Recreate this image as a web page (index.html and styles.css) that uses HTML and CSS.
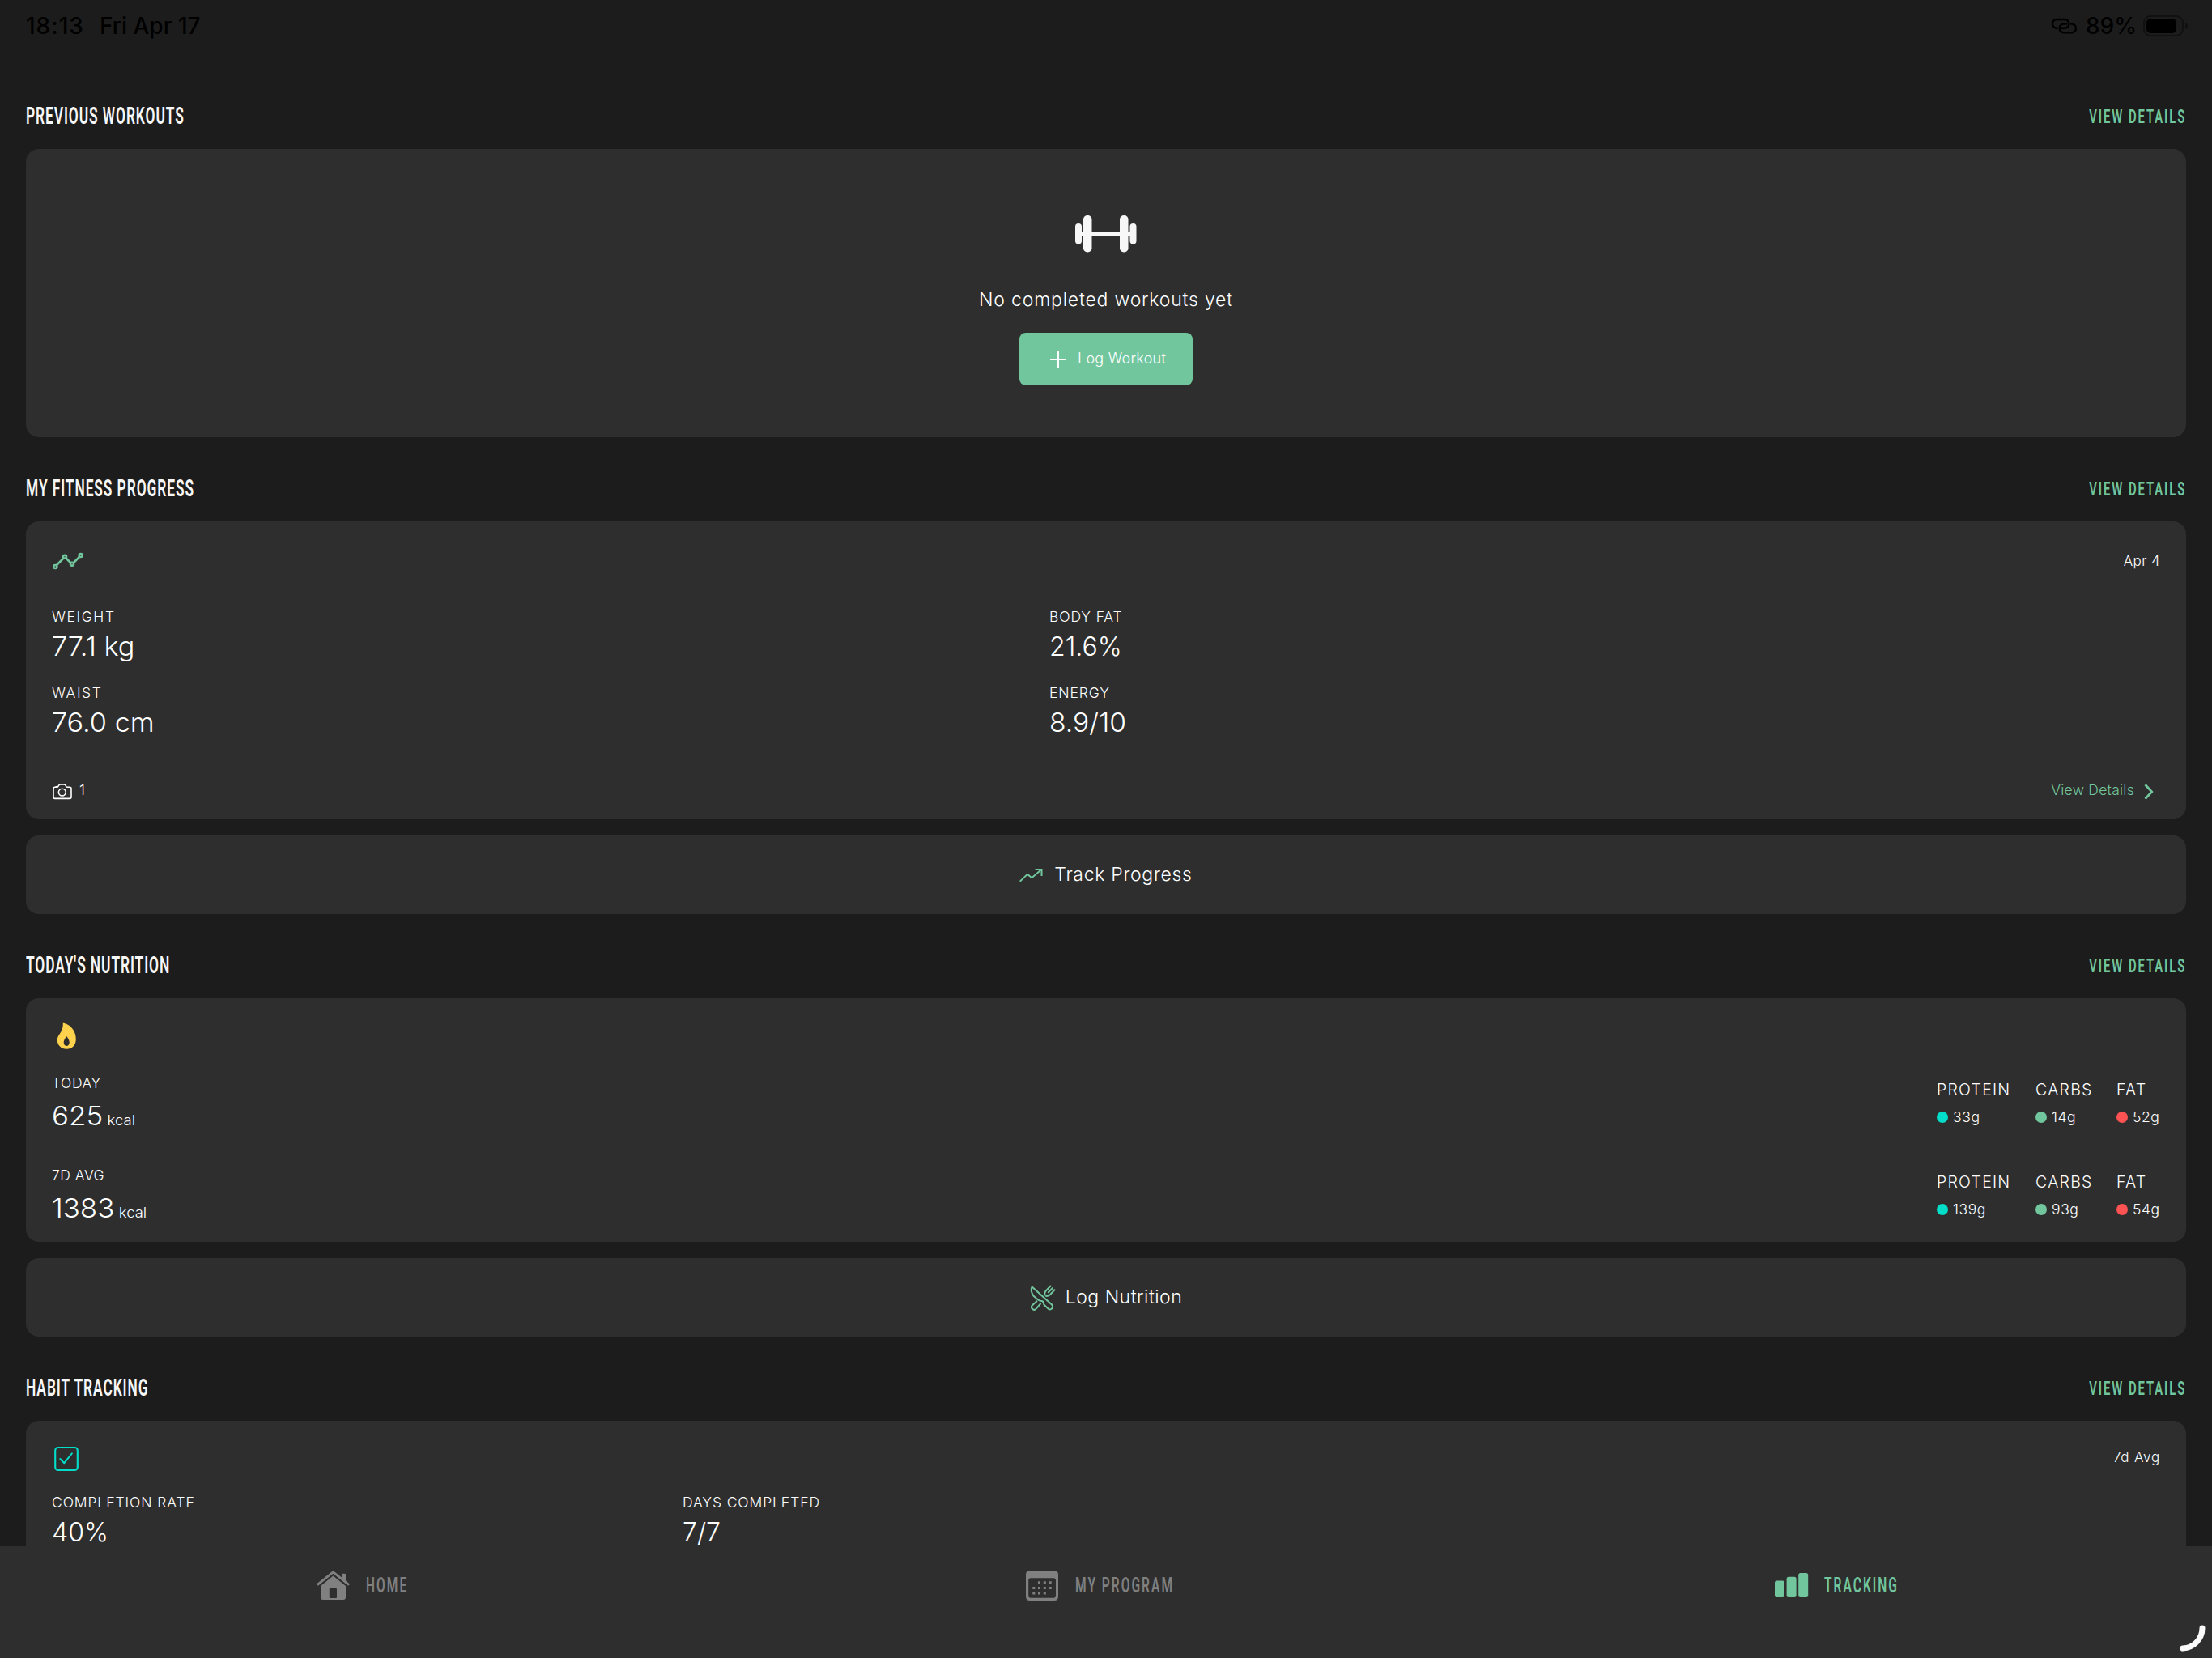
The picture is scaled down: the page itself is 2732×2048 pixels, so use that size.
FILE: index.html
```html
<!DOCTYPE html>
<html lang="en">
<head>
  <meta charset="UTF-8">
  <meta name="viewport" content="width=device-width, initial-scale=1">
  <title>Tracking</title>
  <link rel="stylesheet" href="styles.css">
</head>
<body>

  <!-- Status bar -->
  <header class="status-bar">
    <div class="status-left">
      <span class="time">18:13</span>
      <span class="date">Fri Apr 17</span>
    </div>
    <div class="status-right">
      <svg class="link-icon" width="33" height="21" viewBox="0 0 33 21" fill="none" stroke="#000" stroke-width="2.4" stroke-linecap="round">
        <path d="M7.8 12.8H7.3a5.4 5.4 0 0 1 0-10.8H17a5.4 5.4 0 0 1 0 10.8H13.6"/>
        <path d="M25 7.5h.6a5.4 5.4 0 0 1 0 10.8H16a5.4 5.4 0 0 1 0-10.8h3.2"/>
      </svg>
      <span class="battery-text">89%</span>
      <svg width="56" height="28" viewBox="0 0 56 28">
        <rect x="1" y="2" width="48" height="24" rx="8" fill="none" stroke="#111" stroke-width="2"/>
        <rect x="4" y="5" width="37" height="18" rx="5.5" fill="#000"/>
        <path d="M52 10c2.6 1 3 2.4 3 4s-.4 3-3 4z" fill="#111"/>
      </svg>
    </div>
  </header>

  <main class="container">

    <!-- Previous workouts -->
    <div class="section-head">
      <h2>PREVIOUS WORKOUTS</h2>
      <a class="view-link">VIEW DETAILS</a>
    </div>
    <section class="card empty-card">
      <svg width="76" height="46" viewBox="0 0 76 46" fill="#f7f7f7">
        <rect x="4" y="20" width="68" height="5.4"/>
        <rect x="0" y="10" width="8" height="25.5" rx="4"/>
        <rect x="10" y="0" width="10.5" height="45.5" rx="5"/>
        <rect x="55" y="0" width="10.5" height="45.5" rx="5"/>
        <rect x="67.5" y="10" width="8" height="25.5" rx="4"/>
      </svg>
      <p class="empty-text">No completed workouts yet</p>
      <button class="log-btn">
        <svg width="20" height="20" viewBox="0 0 20 20" stroke="#fff" stroke-width="2">
          <path d="M10 0v20M0 10h20"/>
        </svg>
        <span>Log Workout</span>
      </button>
    </section>

    <!-- Fitness progress -->
    <div class="section-head">
      <h2>MY FITNESS PROGRESS</h2>
      <a class="view-link">VIEW DETAILS</a>
    </div>
    <section class="card progress-card">
      <div class="card-body">
        <div class="card-top">
          <svg width="40" height="22" viewBox="0 0 40 22" fill="none" stroke="#72c69d">
            <path stroke-width="2.6" d="M5.5 16.5L14.5 7.5M17.5 7.5l6 6M26.5 13.5L34.5 5.5"/>
            <g stroke-width="2.6">
              <circle cx="4.3" cy="18" r="2"/>
              <circle cx="16" cy="5.7" r="2"/>
              <circle cx="25" cy="14.8" r="2"/>
              <circle cx="35.7" cy="4" r="2"/>
            </g>
          </svg>
          <span class="stamp">Apr 4</span>
        </div>
        <div class="metrics">
          <div class="metric">
            <div class="label wide">WEIGHT</div>
            <div class="value wide">77.1 kg</div>
          </div>
          <div class="metric">
            <div class="label">BODY FAT</div>
            <div class="value">21.6%</div>
          </div>
          <div class="metric">
            <div class="label wide">WAIST</div>
            <div class="value wide">76.0 cm</div>
          </div>
          <div class="metric">
            <div class="label">ENERGY</div>
            <div class="value loose">8.9/10</div>
          </div>
        </div>
      </div>
      <div class="card-footer">
        <div class="photos">
          <svg width="24" height="20" viewBox="0 0 24 20" fill="none" stroke="#fff" stroke-width="1.6" stroke-linejoin="round">
            <path d="M1 16.500V6q0-1.700 1.700-1.700H5.500q.8 0 1.200-.7L7.800 1.900Q8.300 1 9.300 1h5q1 0 1.500.9l1.100 1.700q.4.700 1.200.7h3.200Q23 4.300 23 6v10.500q0 1.900-1.800 1.900H2.800Q1 18.400 1 16.500z"/>
            <path d="M3.500 3.700h1.500"/>
            <circle cx="11.8" cy="10.6" r="4.4"/>
          </svg>
          <span>1</span>
        </div>
        <a class="footer-link">
          <span>View Details</span>
          <svg width="12" height="20" viewBox="0 0 12 20" fill="none" stroke="#72c69d" stroke-width="2.8">
            <path d="M1.500 1.300l8.200 8.700-8.200 8.700"/>
          </svg>
        </a>
      </div>
    </section>
    <button class="card action-card">
      <svg width="29" height="18" viewBox="0 0 29 18" fill="none" stroke="#72c69d" stroke-width="2">
        <path d="M.7 16.700L8.800 8.900q1.200-1 2.400 0l2.900 2.300q1.200.9 2.400 0L27.200 2"/>
        <path d="M19.500 2h8v8"/>
      </svg>
      <span class="track">Track Progress</span>
    </button>

    <!-- Nutrition -->
    <div class="section-head">
      <h2>TODAY'S NUTRITION</h2>
      <a class="view-link">VIEW DETAILS</a>
    </div>
    <section class="card nutrition-card">
      <svg class="flame" width="24" height="33" viewBox="0 0 24 33">
        <path fill="#ffd24d" fill-rule="evenodd" d="M6.800.3C6.400-.4 7-.4 7.800-.2C16.800 2 22.800 9.700 22.800 19.700C22.800 27 18 31.700 11.300 31.700S-.2 27 -.2 20.700C-.2 13.500 7 12 6.800.3zM11.300 16C8.800 19.500 7.700 21.500 7.700 23.800C7.700 26.500 9.200 28 11.200 28S14.700 26.500 14.700 23.800C14.700 21.500 13.800 19.500 11.300 16z"/>
      </svg>
      <div class="nutrition-row">
        <div class="energy">
          <div class="label tight">TODAY</div>
          <div class="value number">625<span class="unit">kcal</span></div>
        </div>
        <div class="macros">
          <div class="macro"><div class="macro-name">PROTEIN</div><div class="macro-value protein">33g</div></div>
          <div class="macro"><div class="macro-name">CARBS</div><div class="macro-value carbs">14g</div></div>
          <div class="macro"><div class="macro-name">FAT</div><div class="macro-value fat">52g</div></div>
        </div>
      </div>
      <div class="nutrition-row">
        <div class="energy">
          <div class="label tight">7D AVG</div>
          <div class="value number">1383<span class="unit">kcal</span></div>
        </div>
        <div class="macros">
          <div class="macro"><div class="macro-name">PROTEIN</div><div class="macro-value protein">139g</div></div>
          <div class="macro"><div class="macro-name">CARBS</div><div class="macro-value carbs">93g</div></div>
          <div class="macro"><div class="macro-name">FAT</div><div class="macro-value fat">54g</div></div>
        </div>
      </div>
    </section>
    <button class="card action-card">
      <svg width="32" height="32" viewBox="0 0 32 32" fill="none" stroke="#72c69d" stroke-width="2" stroke-linecap="round" stroke-linejoin="round">
        <path d="M2.600 2.400C.8 6 2 10.500 5 14.300L10.500 18.800Q12 20 14.500 20Q16.300 20 16.800 22.500L17.300 24.500L22.300 29.300A3.300 3.300 0 0 0 27.300 24.800z"/>
        <path d="M8.500 20.300L2.500 25.700A3.300 3.300 0 0 0 7 30.300L13 23.500"/>
        <path d="M25.500 1.500L19.600 7.500Q18 9.200 18.300 12.500M28 4L22.800 9.200M30.500 6.300L24.500 12.600Q23 14 20 13.900"/>
      </svg>
      <span class="log">Log Nutrition</span>
    </button>

    <!-- Habits -->
    <div class="section-head">
      <h2>HABIT TRACKING</h2>
      <a class="view-link">VIEW DETAILS</a>
    </div>
    <section class="card habit-card">
      <div class="card-top">
        <svg class="check" width="30" height="30" viewBox="0 0 30 30" fill="none" stroke="#00ddc8" stroke-linecap="round">
          <rect x="1.2" y="1" width="27.6" height="28" rx="3.5" stroke-width="2.1"/>
          <path stroke-width="2" stroke-linejoin="round" d="M7.300 15l5 5.200L21.900 8.300"/>
        </svg>
        <span class="stamp habit-stamp">7d Avg</span>
      </div>
      <div class="habits">
        <div class="metric">
          <div class="label">COMPLETION RATE</div>
          <div class="value">40%</div>
        </div>
        <div class="metric">
          <div class="label">DAYS COMPLETED</div>
          <div class="value">7/7</div>
        </div>
      </div>
    </section>
  </main>

  <!-- Tab bar -->
  <nav class="tab-bar">
    <a class="tab">
      <svg width="41" height="37" viewBox="0 0 41 37" fill="#808080">
        <path d="M31.500 4.800q0-1 1-1H35q1 0 1 1V14l-4.500-4z"/>
        <path d="M1.900 16.800L20.500 1.900 39.100 16.800" fill="none" stroke="#808080" stroke-width="3" stroke-linecap="round" stroke-linejoin="round"/>
        <path fill-rule="evenodd" d="M20.500 6.500L36 19V33q0 3-3 3H8q-3 0-3-3V19zM16.800 22q-1 0-1 1v10q0 1 1 1H24q1 0 1-1V23q0-1-1-1z"/>
      </svg>
      <span class="home">HOME</span>
    </a>
    <a class="tab">
      <svg width="41" height="37" viewBox="0 0 41 37" fill="#808080">
        <path fill-rule="evenodd" d="M5 0H35q5 0 5 5V32q0 5-5 5H5q-5 0-5-5V5Q0 0 5 0zM6 9.200q-2.800 0-2.800 2.800V31Q3.200 33.800 6 33.800H34.200Q37 33.800 37 31V12q0-2.800-2.800-2.800z"/>
        <path d="M15 13.200h3v3h-3zM21.800 13.200h3v3h-3zM28.700 13.200h3v3h-3zM8.300 19.900h3v3h-3zM15 19.900h3v3h-3zM21.800 19.900h3v3h-3zM28.700 19.900h3v3h-3zM8.300 26.500h3v3h-3zM15 26.500h3v3h-3zM21.800 26.500h3v3h-3z"/>
      </svg>
      <span class="program">MY PROGRAM</span>
    </a>
    <a class="tab active">
      <svg width="41" height="30" viewBox="0 0 41 30" fill="#72c69d">
        <rect x="0" y="9.500" width="12" height="20.500" rx="2.5"/>
        <rect x="14.600" y="4.800" width="12" height="25.200" rx="2.5"/>
        <rect x="29.200" y="0" width="12" height="30" rx="2.5"/>
      </svg>
      <span class="tracking">TRACKING</span>
    </a>
  </nav>

  <!-- Pencil corner handle -->
  <svg class="corner" width="34" height="34" viewBox="0 0 34 34" fill="none" stroke="#fafafa" stroke-width="7" stroke-linecap="round">
    <path d="M29 4A25 25 0 0 1 5 29"/>
  </svg>

</body>
</html>
```
FILE: styles.css
```css
* {
  box-sizing: border-box;
}
body {
  margin: 0;
  height: 2048px;
  overflow: hidden;
  background: #1c1c1c;
  color: #fff;
  font-family: Inter, "Liberation Sans", sans-serif;
  font-weight: 340;
}
svg {
  display: block;
  flex: none;
  overflow: visible;
}
h2, p {
  margin: 0;
}
button {
  border: 0;
  font: inherit;
  color: inherit;
}

/* Status bar */
.status-bar {
  display: flex;
  justify-content: space-between;
  align-items: center;
  height: 64px;
  padding: 0 29px 0 32px;
  color: #000;
  font-size: 28px;
  font-weight: 450;
}
.status-left, .status-right {
  display: flex;
  align-items: center;
}
.time {
  width: 91px;
  letter-spacing: 1px;
}
.link-icon {
  margin-right: 10px;
}
.battery-text {
  width: 71px;
}

/* Layout */
.container {
  padding: 36px 32px 0;
  display: flex;
  flex-direction: column;
}
.section-head {
  display: flex;
  justify-content: space-between;
  height: 84px;
  line-height: 84px;
  white-space: nowrap;
}
.section-head h2 {
  padding-top: 1px;
  font-family: Roboto, sans-serif;
  font-size: 29px;
  font-weight: 600;
  letter-spacing: 1.5px;
  color: #f7f7f7;
  transform: scaleX(0.6);
  transform-origin: left;
}
.view-link {
  padding-top: 2px;
  font-family: Roboto, sans-serif;
  font-size: 24.5px;
  font-weight: 600;
  letter-spacing: 3.2px;
  color: #72c69d;
  transform: scaleX(0.605);
  transform-origin: right;
}
.card {
  background: #2e2e2e;
  border-radius: 16px;
  margin-bottom: 20px;
}
.card-top {
  display: flex;
  justify-content: space-between;
  align-items: center;
}
.stamp {
  padding-bottom: 1px;
  font-size: 17px;
  letter-spacing: 0.4px;
}

/* Empty workouts card */
.empty-card {
  height: 356px;
  padding-top: 82px;
  display: flex;
  flex-direction: column;
  align-items: center;
}
.empty-text {
  margin-top: 40px;
  font-size: 23px;
  line-height: 36px;
  letter-spacing: 0.8px;
}
.log-btn {
  display: flex;
  align-items: center;
  gap: 14px;
  width: 214px;
  height: 65px;
  margin-top: 23px;
  padding: 0 0 0 38px;
  border-radius: 8px;
  background: #72c69d;
  font-size: 18px;
  letter-spacing: 0.25px;
}
.log-btn span {
  padding-bottom: 3px;
}

/* Metrics */
.progress-card {
  height: 368px;
  display: flex;
  flex-direction: column;
}
.card-body {
  flex: 1;
  padding: 32px 32px 0;
}
.progress-card .card-top {
  height: 34px;
}
.metrics {
  display: grid;
  grid-template-columns: 1232px 1fr;
  row-gap: 25px;
  margin-top: 40px;
}
.label {
  font-size: 17.5px;
  line-height: 24px;
  letter-spacing: 0.9px;
}
.label.wide {
  letter-spacing: 1.6px;
}
.label.tight {
  letter-spacing: 0.5px;
}
.value {
  margin-top: 5px;
  font-size: 32px;
  line-height: 40px;
  transform-origin: left;
}
.value.wide {
  transform: scaleX(1.07);
}
.value.loose {
  transform: scaleX(1.05);
}
.card-footer {
  display: flex;
  justify-content: space-between;
  align-items: center;
  height: 70px;
  padding: 0 40px 0 33px;
  border-top: 1px solid #444;
  font-size: 17.5px;
}
.card-footer span {
  padding-bottom: 4px;
}
.photos, .footer-link {
  display: flex;
  align-items: center;
  gap: 9px;
}
.footer-link {
  gap: 12px;
  color: #72c69d;
  letter-spacing: 0.25px;
}

/* Action cards */
.action-card {
  display: flex;
  justify-content: center;
  align-items: center;
  height: 97px;
  padding: 0;
  font-size: 23px;
}
.action-card span {
  padding-bottom: 2px;
}
.track {
  margin-left: 14px;
  letter-spacing: 0.7px;
}
.log {
  margin-left: 12px;
  letter-spacing: 0.5px;
}

/* Nutrition */
.nutrition-card {
  height: 301px;
  padding: 31px 32px 0;
}
.flame {
  margin: 0 0 29px 7px;
}
.nutrition-row {
  display: flex;
  justify-content: space-between;
  height: 114px;
}
.number {
  margin-top: 9px;
  transform: scaleX(1.09);
}
.unit {
  margin-left: 5px;
  font-size: 17px;
}
.macros {
  display: grid;
  grid-template-columns: 122px 100px 54px;
  padding-top: 8px;
}
.macro-name {
  font-size: 19.5px;
  line-height: 24px;
  letter-spacing: 1.25px;
}
.macro-value {
  display: flex;
  align-items: center;
  margin-top: 10px;
  font-size: 17.5px;
  line-height: 24px;
  letter-spacing: 0.6px;
}
.macro-value::before {
  content: "";
  width: 14px;
  height: 14px;
  margin-right: 6px;
  border-radius: 50%;
}
.protein::before {
  background: #00ddc8;
}
.carbs::before {
  background: #72c69d;
}
.fat::before {
  background: #ff5252;
}

/* Habits */
.habit-card {
  height: 300px;
  padding: 32px 32px 0;
}
.check {
  margin-left: 3px;
}
.habit-stamp {
  letter-spacing: 0.8px;
  padding-bottom: 4px;
}
.habits {
  display: grid;
  grid-template-columns: 779px 1fr;
  margin-top: 27px;
}

/* Tab bar */
.tab-bar {
  position: fixed;
  left: 0;
  right: 0;
  bottom: 0;
  display: flex;
  height: 138px;
  padding-bottom: 42px;
  background: #2e2e2e;
}
.tab {
  flex: 1;
  display: flex;
  justify-content: center;
  align-items: center;
  gap: 20px;
  padding-right: 17px;
  color: #808080;
  font-family: Roboto, sans-serif;
  font-size: 25.5px;
  font-weight: 600;
  letter-spacing: 3.3px;
  white-space: nowrap;
}
.tab.active {
  color: #72c69d;
}
.tab span {
  transform: scaleX(0.61);
  transform-origin: left;
}
.home {
  width: 50px;
}
.program {
  width: 121px;
}
.tracking {
  width: 92px;
}
.corner {
  position: fixed;
  right: 7px;
  bottom: 7px;
}
```
